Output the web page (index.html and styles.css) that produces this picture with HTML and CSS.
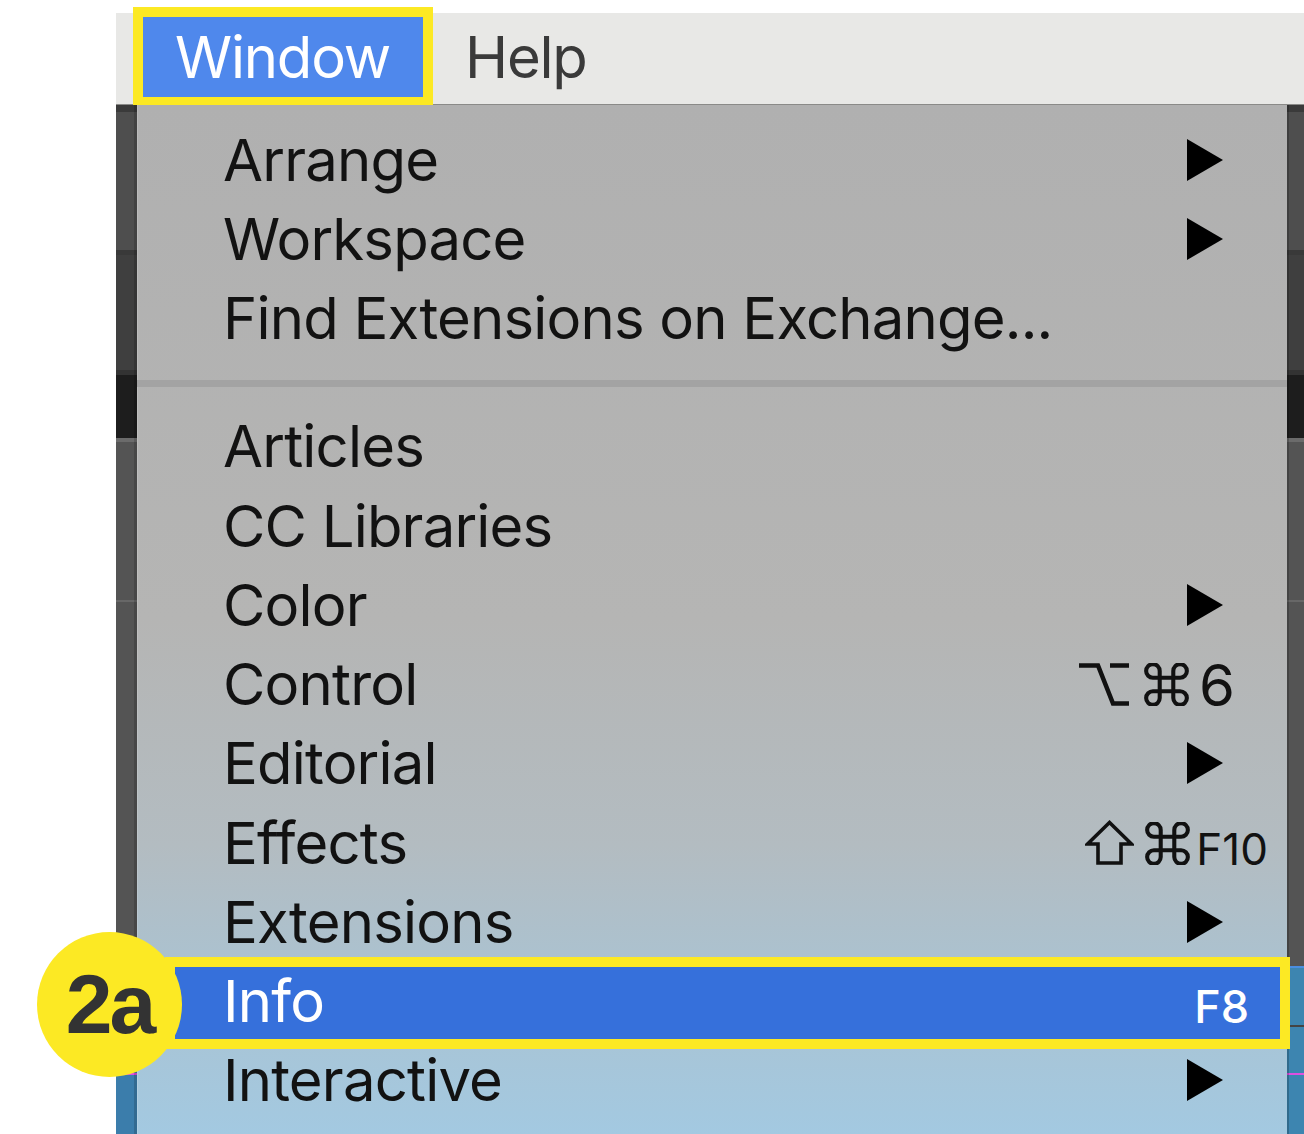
FILE: index.html
```html
<!DOCTYPE html>
<html lang="en">
<head>
    <meta charset="UTF-8">
    <meta name="viewport" content="width=device-width, initial-scale=1.0">
    <title>Window menu - Info</title>
    <link rel="stylesheet" href="styles.css">
</head>
<body>
    <div class="screen">
        <div class="menubar">
            <div class="menubar-item is-open">Window</div>
            <div class="menubar-item">Help</div>
        </div>

        <div class="workspace">
            <div class="strip strip-left"></div>

            <div class="menu">
                <div class="menu-group first">
                    <div class="menu-row">
                        <span>Arrange</span>
                        <svg class="sub" viewBox="0 0 36 42"><polygon points="0,0 36,21 0,42"/></svg>
                    </div>
                    <div class="menu-row">
                        <span>Workspace</span>
                        <svg class="sub" viewBox="0 0 36 42"><polygon points="0,0 36,21 0,42"/></svg>
                    </div>
                    <div class="menu-row">
                        <span>Find Extensions on Exchange...</span>
                    </div>
                </div>

                <div class="menu-sep"></div>

                <div class="menu-group">
                    <div class="menu-row"><span>Articles</span></div>
                    <div class="menu-row"><span>CC Libraries</span></div>
                    <div class="menu-row">
                        <span>Color</span>
                        <svg class="sub" viewBox="0 0 36 42"><polygon points="0,0 36,21 0,42"/></svg>
                    </div>
                    <div class="menu-row">
                        <span>Control</span>
                        <span class="keys keys-ctl">
                            <svg class="k-opt" viewBox="0 0 50 43"><path d="M0 2.5H19L34 40.5H50M31 2.5H50"/></svg>
                            <svg class="k-cmd" viewBox="2.5 2.5 19 19"><path d="M15 6v12a3 3 0 1 0 3-3H6a3 3 0 1 0 3 3V6a3 3 0 1 0-3 3h12a3 3 0 1 0-3-3"/></svg>
                            <span class="k-big">6</span>
                        </span>
                    </div>
                    <div class="menu-row">
                        <span>Editorial</span>
                        <svg class="sub" viewBox="0 0 36 42"><polygon points="0,0 36,21 0,42"/></svg>
                    </div>
                    <div class="menu-row">
                        <span>Effects</span>
                        <span class="keys keys-fx">
                            <svg class="k-shift" viewBox="0 0 49 45"><path d="M24.5 2.5L2.5 24H13V43H36V24H46.5Z"/></svg>
                            <svg class="k-cmd" viewBox="2.5 2.5 19 19"><path d="M15 6v12a3 3 0 1 0 3-3H6a3 3 0 1 0 3 3V6a3 3 0 1 0-3 3h12a3 3 0 1 0-3-3"/></svg>
                            <span class="k-small">F10</span>
                        </span>
                    </div>
                    <div class="menu-row">
                        <span>Extensions</span>
                        <svg class="sub" viewBox="0 0 36 42"><polygon points="0,0 36,21 0,42"/></svg>
                    </div>
                    <div class="menu-row is-active">
                        <span>Info</span>
                        <span class="keys keys-info"><span class="k-small">F8</span></span>
                    </div>
                    <div class="menu-row">
                        <span>Interactive</span>
                        <svg class="sub" viewBox="0 0 36 42"><polygon points="0,0 36,21 0,42"/></svg>
                    </div>
                </div>
            </div>

            <div class="strip strip-right"></div>
        </div>

        <!-- step marker -->
        <div class="step-badge">2a</div>
    </div>
</body>
</html>
```

FILE: styles.css
```css
html, body {
    margin: 0;
    height: 1134px;
    overflow: hidden;
    background: #fff;
}
.screen {
    position: relative;
    margin: 13px 0 0 116px;
    width: 1188px;
    height: 1121px;
    font-family: Inter, "Noto Sans", sans-serif;
}
.menubar {
    height: 91px;
    background: #e8e8e6;
    border-bottom: 1px solid #8a8a88;
    display: flex;
    align-items: flex-start;
}
.menubar-item {
    height: 80px;
    line-height: 80px;
    margin-top: 4px;
    font-size: 58px;
    letter-spacing: -1.2px;
    color: #3a3a3a;
    padding: 0 34px 0 42px;
}
.menubar-item.is-open {
    margin-left: 27px;
    width: 280px;
    box-sizing: border-box;
    padding: 0 0 0 32px;
    background: #4f88ec;
    color: #fff;
    outline: 10px solid #fce924;
}
.workspace {
    display: flex;
    height: 1029px;
}
.strip {
    flex: none;
    height: 100%;
}
.strip-left {
    width: 21px;
    background: linear-gradient(to bottom,
        #3a3a3a 0, #3a3a3a 7px,
        #4e4e4e 7px, #4e4e4e 145px,
        #393939 145px, #393939 150px,
        #3f3f3f 150px, #3f3f3f 265px,
        #333 265px, #333 270px,
        #1d1d1d 270px, #1d1d1d 333px,
        #6b6b6b 333px, #6b6b6b 337px,
        #545454 337px, #545454 495px,
        #676767 495px, #676767 497px,
        #545454 497px, #545454 955px,
        #3b7dab 955px, #3b7dab 968px,
        #e04ee0 968px, #e04ee0 970px,
        #3b7dab 970px);
    box-shadow: inset -3px 0 0 rgba(0, 0, 0, 0.15);
}
.strip-right {
    width: 17px;
    background: linear-gradient(to bottom,
        #3a3a3a 0, #3a3a3a 7px,
        #4e4e4e 7px, #4e4e4e 145px,
        #393939 145px, #393939 150px,
        #3f3f3f 150px, #3f3f3f 265px,
        #333 265px, #333 270px,
        #1d1d1d 270px, #1d1d1d 333px,
        #6b6b6b 333px, #6b6b6b 337px,
        #545454 337px, #545454 495px,
        #676767 495px, #676767 497px,
        #545454 497px, #545454 861px,
        #4a8ee0 861px, #4a8ee0 863px,
        #3d85b0 863px, #3d85b0 920px,
        #444 920px, #444 922px,
        #3d85b0 922px, #3d85b0 968px,
        #e04ee0 968px, #e04ee0 970px,
        #3d85b0 970px);
    box-shadow: inset 2px 0 0 rgba(0, 0, 0, 0.2);
}
.menu {
    width: 1150px;
    flex: none;
    background: linear-gradient(to bottom, #b0b0b0 0%, #b5b5b4 50%, #b3bcc1 72%, #abc2d0 84%, #a3c9e1 100%);
    box-shadow: inset 1px 0 0 rgba(255, 255, 255, 0.15);
}
.menu-group.first {
    padding-top: 15px;
}
.menu-row {
    display: flex;
    align-items: center;
    justify-content: space-between;
    height: 79.25px;
    padding: 0 20px 0 86px;
    font-size: 58px;
    letter-spacing: -0.8px;
    color: #121212;
}
.menu-sep {
    height: 7px;
    margin: 22px 0 20px;
    background: #a3a3a3;
}
.sub {
    width: 36px;
    height: 42px;
    margin-right: 44px;
    fill: #000;
}
.keys {
    display: flex;
    align-items: flex-end;
    height: 44px;
    letter-spacing: 0;
}
.keys svg {
    fill: none;
    stroke: #111;
}
.k-opt {
    width: 50px;
    height: 43px;
    stroke-width: 4.5;
    margin-right: 15px;
}
.k-cmd {
    width: 45px;
    height: 43px;
    stroke-width: 1.8;
}
.k-shift {
    width: 49px;
    height: 45px;
    stroke-width: 3.6;
    margin-right: 11px;
    stroke-linejoin: miter;
}
.k-big {
    font-size: 58px;
    line-height: 44px;
    margin-left: 10px;
    position: relative;
    top: 1px;
}
.k-small {
    font-size: 44px;
    line-height: 32px;
    margin-left: 6px;
}
.keys-ctl {
    margin-right: 32px;
}
.keys-fx {
    margin-right: -1px;
}
.keys-info {
    margin-right: 18px;
}
.keys-info .k-small {
    font-size: 45px;
    font-weight: 500;
    color: #fff;
}
.menu-row.is-active {
    position: relative;
    z-index: 0;
    color: #fff;
}
.menu-row.is-active::before {
    content: '';
    position: absolute;
    z-index: -1;
    left: 28px;
    right: -3px;
    top: -5px;
    bottom: -8px;
    background: #3670db;
    border: 10px solid #fce924;
}
.step-badge {
    position: absolute;
    left: -79px;
    top: 919px;
    width: 145px;
    height: 145px;
    border-radius: 50%;
    background: #fce924;
    color: #333;
    font-family: "Liberation Sans", Arial, sans-serif;
    font-weight: bold;
    font-size: 84px;
    letter-spacing: -3px;
    display: flex;
    align-items: center;
    justify-content: center;
    z-index: 2;
}
```
